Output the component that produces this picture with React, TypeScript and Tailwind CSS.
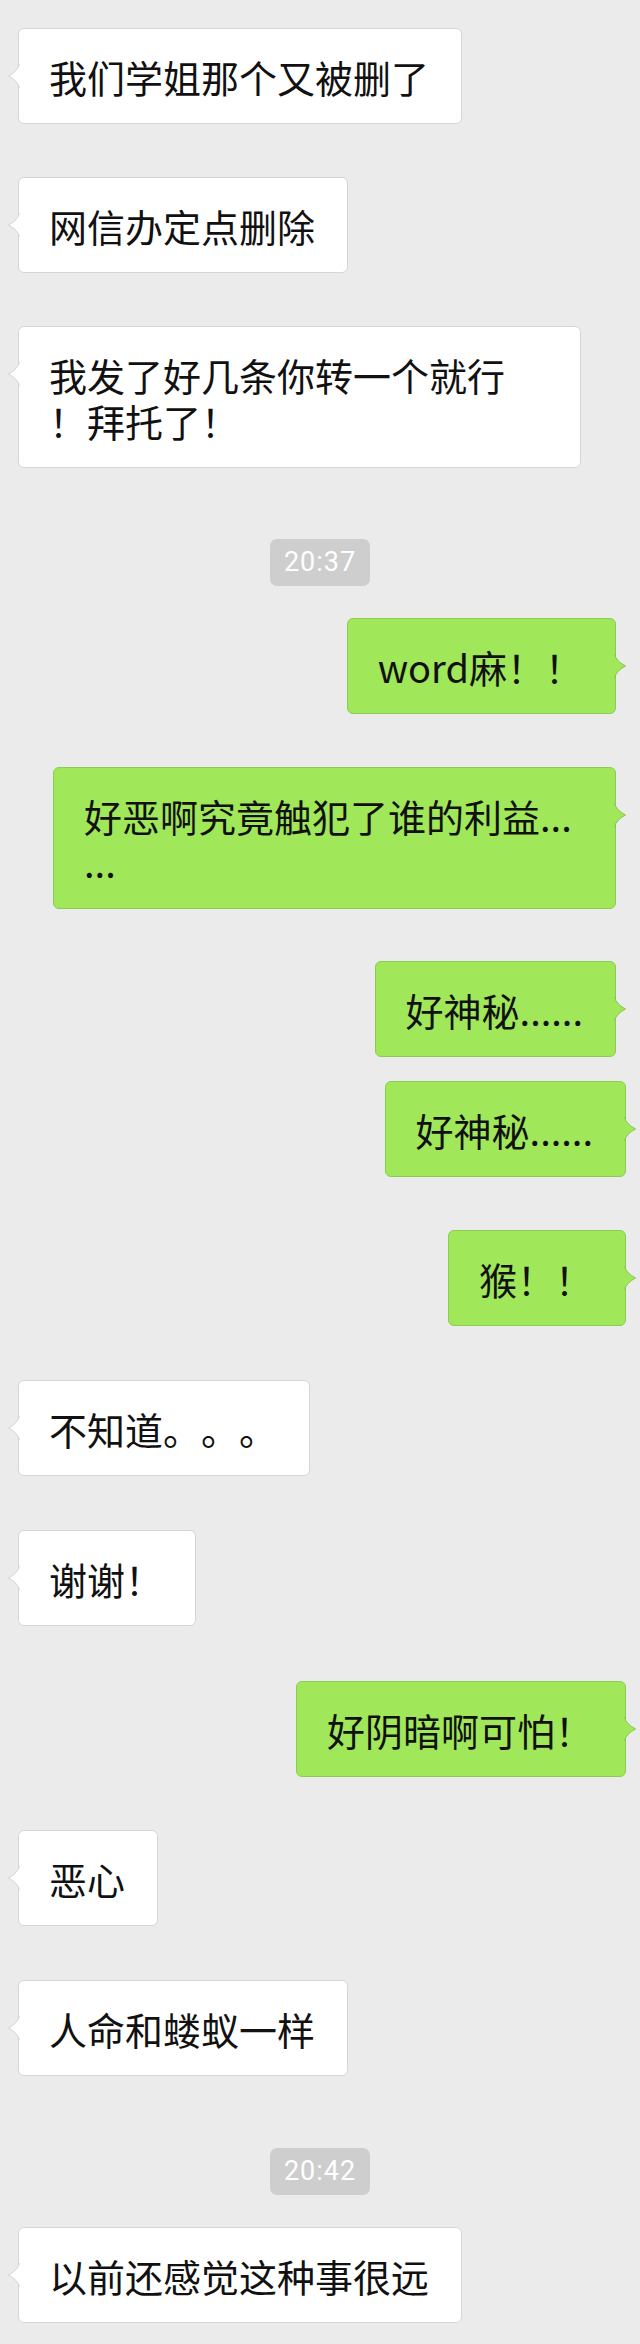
import React from 'react';

type Item =
  | { kind: 'time'; text: string; gap: string }
  | { kind: 'in' | 'out'; lines: string[]; gap: string; edge?: string };

const items: Item[] = [
  { kind: 'in', lines: ['我们学姐那个又被删了'], gap: 'mt-[28px]' },
  { kind: 'in', lines: ['网信办定点删除'], gap: 'mt-[53px]' },
  { kind: 'in', lines: ['我发了好几条你转一个就行', '！拜托了！'], gap: 'mt-[53px]' },
  { kind: 'time', text: '20:37', gap: 'mt-[71px]' },
  { kind: 'out', lines: ['word麻！！'], gap: 'mt-[32px]' },
  { kind: 'out', lines: ['好恶啊究竟触犯了谁的利益...', '...'], gap: 'mt-[53px]' },
  { kind: 'out', lines: ['好神秘......'], gap: 'mt-[52px]' },
  { kind: 'out', lines: ['好神秘......'], gap: 'mt-[24px]', edge: 'mr-[14px]' },
  { kind: 'out', lines: ['猴！！'], gap: 'mt-[53px]', edge: 'mr-[14px]' },
  { kind: 'in', lines: ['不知道。。。'], gap: 'mt-[54px]' },
  { kind: 'in', lines: ['谢谢！'], gap: 'mt-[54px]' },
  { kind: 'out', lines: ['好阴暗啊可怕！'], gap: 'mt-[55px]', edge: 'mr-[14px]' },
  { kind: 'in', lines: ['恶心'], gap: 'mt-[53px]' },
  { kind: 'in', lines: ['人命和蝼蚁一样'], gap: 'mt-[54px]' },
  { kind: 'time', text: '20:42', gap: 'mt-[72px]' },
  { kind: 'in', lines: ['以前还感觉这种事很远'], gap: 'mt-[32px]' },
];

function Tail({ side }: { side: 'in' | 'out' }) {
  const fill = side === 'in' ? '#ffffff' : '#a0e75a';
  const stroke = side === 'in' ? '#d4d4d4' : '#86c84c';
  return (
    <svg
      width="14"
      height="24"
      viewBox="0 0 14 24"
      className={
        side === 'in'
          ? 'absolute left-[-12px] top-[35px]'
          : 'absolute right-[-12px] top-[35px] -scale-x-100'
      }
    >
      <path d="M14 0 L12.5 0 Q11 7 1.5 12 Q11 17 12.5 24 L14 24 Z" fill={fill} />
      <path d="M12.5 0 Q11 7 1.5 12 Q11 17 12.5 24" fill="none" stroke={stroke} strokeWidth="1" />
    </svg>
  );
}

function Bubble({ side, lines }: { side: 'in' | 'out'; lines: string[] }) {
  const tone =
    side === 'in'
      ? 'bg-white border-[#d6d6d6]'
      : 'bg-[#a0e75a] border-[#8bcc52]';
  // wrapped messages fill the max bubble width
  const width = lines.length > 1 ? 'w-[563px]' : '';
  return (
    <div
      className={`relative rounded-[6px] border pl-[30px] pr-[32px] pt-[25px] pb-[23px] text-[38px] leading-[46px] text-[#111] [text-spacing-trim:space-all] ${tone} ${width}`}
    >
      {lines.map((l, i) => (
        <div key={i} className="whitespace-nowrap">
          {l}
        </div>
      ))}
      <Tail side={side} />
    </div>
  );
}

export default function App() {
  return (
    <div className="flex min-h-[2344px] w-[640px] flex-col bg-[#ebebeb] pb-[15px] font-['Noto_Sans_CJK_SC',sans-serif]">
      {items.map((it, i) => {
        if (it.kind === 'time') {
          return (
            <div key={i} className={`flex justify-center ${it.gap}`}>
              <div className="h-[47px] rounded-[7px] bg-[#cecece] px-[14px] font-['Roboto',sans-serif] text-[27px] leading-[47px] tracking-[1px] text-white">
                {it.text}
              </div>
            </div>
          );
        }
        return (
          <div
            key={i}
            className={`flex ${it.gap} ${
              it.kind === 'in' ? 'justify-start pl-[18px]' : `justify-end ${it.edge ?? 'mr-[24px]'}`
            }`}
          >
            <Bubble side={it.kind} lines={it.lines} />
          </div>
        );
      })}
    </div>
  );
}
